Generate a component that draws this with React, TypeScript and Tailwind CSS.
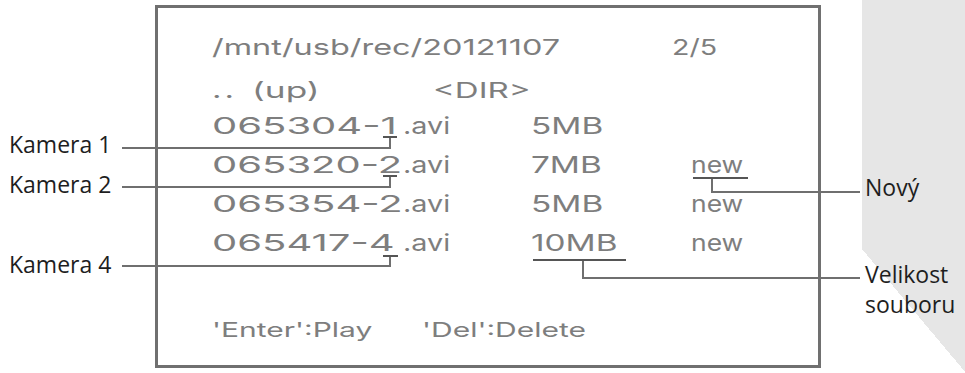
import React from "react";

const files = [
  { base: "065304-1", size: "5MB", isNew: false },
  { base: "065320-2", size: "7MB", isNew: true },
  { base: "065354-2", size: "5MB", isNew: true },
  { base: "065417-4", size: "10MB", isNew: true },
];

const Wide = ({ children, className }: { children: React.ReactNode; className: string }) => (
  <span className={"inline-block origin-left whitespace-pre " + className}>{children}</span>
);

const App = () => {
  return (
    <div className="relative flex w-[965px] h-[373px] overflow-hidden bg-white">
      {/* Labels on the left */}
      <div className="w-[155px] shrink-0 pt-[124px] pl-[9px] font-['Open_Sans',sans-serif] text-[23px] text-[#1e1e1e]">
        <div className="h-[40px] leading-[40px]">Kamera 1</div>
        <div className="h-[40px] leading-[40px]">Kamera 2</div>
        <div className="h-[40px]" />
        <div className="h-[40px] leading-[40px]">Kamera 4</div>
      </div>

      {/* Screen */}
      <div className="mt-[5px] h-[363px] w-[666px] shrink-0 border-[3px] border-[#707070] pl-[54px] pt-[21px] font-['Inter','DejaVu_Sans',sans-serif] font-normal text-[#7e7e7e]">
        <div className="grid h-[36px] grid-cols-[460px_auto] text-[22px] leading-[36px]">
          <Wide className="scale-x-[1.475]">/mnt/usb/rec/20121107</Wide>
          <Wide className="scale-x-[1.3]">2/5</Wide>
        </div>
        <div className="mt-[8px] grid h-[34px] grid-cols-[40px_181px_auto] text-[22px] leading-[34px]">
          <Wide className="scale-x-[1.5] tracking-[2px]">..</Wide>
          <Wide className="scale-x-[1.6]">(up)</Wide>
          <Wide className="scale-x-[1.5]">{"<DIR>"}</Wide>
        </div>
        {files.map((f) => (
          <div key={f.base} className="grid h-[39px] grid-cols-[191px_128px_160px_auto] text-[23px] leading-[39px]">
            <Wide className="scale-x-[1.74]">{f.base}</Wide>
            <Wide className="scale-x-[1.25]">.avi</Wide>
            <Wide className="scale-x-[1.45]">{f.size}</Wide>
            {f.isNew ? <Wide className="scale-x-[1.15]">new</Wide> : <span />}
          </div>
        ))}
        <div className="mt-[52px] grid h-[30px] grid-cols-[210px_auto] text-[20px] leading-[30px]">
          <Wide className="scale-x-[1.5]">'Enter':Play</Wide>
          <Wide className="scale-x-[1.5]">'Del':Delete</Wide>
        </div>
      </div>

      <div className="w-[41px] shrink-0" />

      {/* Labels on the right */}
      <div className="w-[103px] shrink-0 bg-[linear-gradient(230deg,#e6e6e6_75%,#ffffff_75%)] pl-[3px] pt-[167px] font-['Open_Sans',sans-serif] text-[23px] text-[#1e1e1e]">
        <div className="h-[40px] leading-[40px]">Nový</div>
        <div className="mt-[52px] leading-[30px]">
          <div>Velikost</div>
          <div>souboru</div>
        </div>
      </div>

      {/* Leader lines */}
      <svg className="pointer-events-none absolute inset-0" width="965" height="373" viewBox="0 0 965 373" fill="none">
        <g stroke="#6f6f6f" strokeWidth="2">
          <path d="M122 148H390V137" />
          <path d="M122 187H390V176" />
          <path d="M122 266H390V256" />
          <path d="M712 178V192H860" />
          <path d="M583 260V278H860" />
        </g>
        <g stroke="#555" strokeWidth="2">
          <path d="M383 137H397" />
          <path d="M383 176H397" />
          <path d="M383 256H398" />
          <path d="M693 178H748" />
          <path d="M533 260H626" />
        </g>
      </svg>
    </div>
  );
};

export default App;
